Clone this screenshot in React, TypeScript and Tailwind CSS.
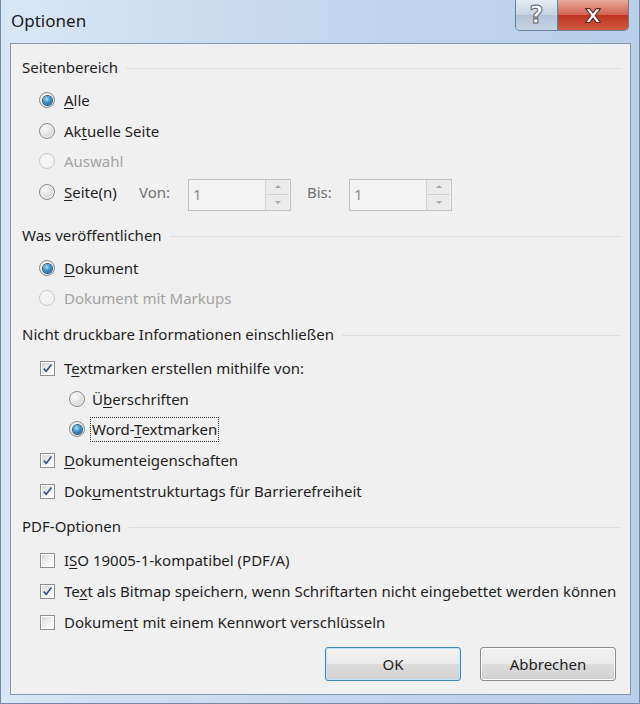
import React from 'react';

type Label = { pre?: string; key?: string; post?: string };

function Radio({ checked = false, disabled = false }: { checked?: boolean; disabled?: boolean }) {
  return (
    <div
      className={`w-[16px] h-[16px] rounded-full border flex items-center justify-center shrink-0 ${
        disabled
          ? 'border-[#c9c9c9] bg-[#f4f4f4]'
          : 'border-[#8a8a8a] bg-[radial-gradient(circle_at_35%_30%,#fdfdfd,#e2e2e2_50%,#c6c6c6)] shadow-[inset_0_0_0_1px_#f2f2f2]'
      }`}
    >
      {checked && (
        <div className="w-[9px] h-[9px] rounded-full bg-[radial-gradient(circle_at_40%_35%,#a9e0fb,#3d8fc4_45%,#17507e)] shadow-[0_0_0_1px_#2a5f8a]" />
      )}
    </div>
  );
}

function Check({ checked = false }: { checked?: boolean }) {
  return (
    <div className="w-[15px] h-[15px] border border-[#8f8f8f] bg-white p-[1px] shrink-0">
      <div className="w-full h-full bg-[linear-gradient(135deg,#d6d6d6,#f3f3f3_60%,#ffffff)] relative">
        {checked && (
          <svg viewBox="0 0 11 11" className="absolute inset-0 w-full h-full">
            <path d="M1.8 5.6 L4.3 8.3 L9.4 1.6" fill="none" stroke="#3c5485" strokeWidth="1.7" strokeLinejoin="round" />
          </svg>
        )}
      </div>
    </div>
  );
}

function Text({ l }: { l: Label }) {
  return (
    <>
      {l.pre}
      {l.key && <span className="underline underline-offset-[2px] decoration-1">{l.key}</span>}
      {l.post}
    </>
  );
}

function Header({ title, mt }: { title: string; mt: string }) {
  return (
    <div className={`flex items-center h-[30px] pl-[11px] pr-[10px] ${mt}`}>
      <span className="text-[#1e1e1e]">{title}</span>
      <div className="flex-1 h-px bg-[#dcdfe2] ml-[8px] mt-[2px]" />
    </div>
  );
}

function RadioRow({ l, checked, disabled, mt }: { l: Label; checked?: boolean; disabled?: boolean; mt: string }) {
  return (
    <div className={`flex items-center h-[30px] pl-[28px] ${mt}`}>
      <Radio checked={checked} disabled={disabled} />
      <span className={`ml-[9px] ${disabled ? 'text-[#a3a3a3]' : 'text-[#1e1e1e]'}`}>
        <Text l={l} />
      </span>
    </div>
  );
}

function SubRadio({ l, checked, focus, mt }: { l: Label; checked?: boolean; focus?: boolean; mt: string }) {
  return (
    <div className={`flex items-center h-[30px] pl-[58px] ${mt}`}>
      <Radio checked={checked} />
      <span
        className={`ml-[5px] px-[1px] leading-[23px] border border-dotted ${
          focus ? 'border-[#333]' : 'border-transparent'
        } text-[#1e1e1e]`}
      >
        <Text l={l} />
      </span>
    </div>
  );
}

function CheckRow({ l, checked, mt }: { l: Label; checked?: boolean; mt: string }) {
  return (
    <div className={`flex items-center h-[30px] pl-[29px] ${mt}`}>
      <Check checked={checked} />
      <span className="ml-[9px] text-[#1e1e1e]">
        <Text l={l} />
      </span>
    </div>
  );
}

function Spin() {
  return (
    <div className="flex items-center w-[103px] h-[32px] border border-[#c2c2c2] bg-[#f3f3f3] mt-[5px] shrink-0">
      <span className="flex-1 pl-[4px] text-[#8c8c8c]">1</span>
      <div className="flex flex-col w-[24px] h-full border-l border-[#d2d2d2] mr-[1px]">
        <div className="flex-1 flex items-center justify-center bg-[#ebebeb] border-b border-[#d2d2d2]">
          <div className="w-0 h-0 border-x-[3px] border-x-transparent border-b-[3px] border-b-[#a8a8a8]" />
        </div>
        <div className="flex-1 flex items-center justify-center bg-[#ebebeb]">
          <div className="w-0 h-0 border-x-[3px] border-x-transparent border-t-[3px] border-t-[#a8a8a8]" />
        </div>
      </div>
    </div>
  );
}

function WinButton({ label, primary }: { label: string; primary?: boolean }) {
  return (
    <div
      className={`w-[136px] h-[34px] rounded-[3px] border flex items-center justify-center text-[#1e1e1e] ${
        primary
          ? 'border-[#3d8bbd] shadow-[inset_0_0_0_1px_#bfe4f9] bg-[linear-gradient(#f3f3f3,#ebebeb_50%,#dcdcdc_50%,#d2d2d2)]'
          : 'border-[#8b8b8b] shadow-[inset_0_0_0_1px_#fafafa] bg-[linear-gradient(#f3f3f3,#ebebeb_50%,#dddddd_50%,#d0d0d0)]'
      }`}
    >
      {label}
    </div>
  );
}

export default function App() {
  return (
    <div className="w-[640px] h-[704px] flex flex-col bg-[linear-gradient(90deg,#d9e6f4,#c3d7ee_50%,#b8cfe9)] border-x border-b border-[#7489a5] font-['Noto_Sans','Open_Sans',sans-serif] text-[15px]">
      {/* title bar */}
      <div className="h-[43px] flex items-start shrink-0">
        <div className="pl-[10px] pt-[8px] text-[17px] text-[#1b1b1b]">Optionen</div>
        <div className="ml-auto mr-[10px] flex h-[31px] border border-t-0 border-[#6b7f99] rounded-b-[5px] overflow-hidden">
          <div className="w-[42px] h-full flex items-center justify-center bg-[linear-gradient(#e4ebf3,#c7d3e2_50%,#b3c3d6_50%,#c6d4e4)] border-r border-[#6b7f99]">
            <span className="text-[24px] font-bold text-white leading-none [-webkit-text-stroke:1px_#58606b] font-['DejaVu_Sans',sans-serif]">?</span>
          </div>
          <div className="w-[70px] h-full flex items-center justify-center bg-[linear-gradient(#e9a99c,#d0614f_50%,#c0321f_50%,#d25b3f)]">
            <svg viewBox="0 0 20 16" className="w-[22px] h-[17px]">
              <path
                d="M3 1.5h4l3 4 3-4h4l-5 6.5 5 6.5h-4l-3-4-3 4H3l5-6.5z"
                fill="#ffffff"
                stroke="#5b2a22"
                strokeWidth="1"
                strokeLinejoin="round"
              />
            </svg>
          </div>
        </div>
      </div>

      {/* content panel */}
      <div className="flex-1 ml-[9px] mr-[8px] mb-[8px] border border-[#8596ab] bg-[#f0f0f0] flex flex-col">
        <Header title="Seitenbereich" mt="mt-[8px]" />
        <RadioRow l={{ key: 'A', post: 'lle' }} checked mt="mt-[3px]" />
        <RadioRow l={{ pre: 'Ak', key: 't', post: 'uelle Seite' }} mt="mt-[1px]" />
        <RadioRow l={{ pre: 'Auswahl' }} disabled mt="mt-0" />
        <div className="flex items-center h-[30px] pl-[28px] mt-[1px]">
          <Radio />
          <span className="ml-[9px] text-[#1e1e1e] w-[75px] shrink-0">
            <Text l={{ key: 'S', post: 'eite(n)' }} />
          </span>
          <span className="text-[#707070] w-[49px] shrink-0">Von:</span>
          <Spin />
          <span className="text-[#707070] ml-[16px] w-[42px] shrink-0">Bis:</span>
          <Spin />
        </div>

        <Header title="Was veröffentlichen" mt="mt-[13px]" />
        <RadioRow l={{ key: 'D', post: 'okument' }} checked mt="mt-[3px]" />
        <RadioRow l={{ pre: 'Dokument mit Markups' }} disabled mt="mt-0" />

        <Header title="Nicht druckbare Informationen einschließen" mt="mt-[6px]" />
        <CheckRow l={{ pre: 'T', key: 'e', post: 'xtmarken erstellen mithilfe von:' }} checked mt="mt-[4px]" />
        <SubRadio l={{ pre: 'Ü', key: 'b', post: 'erschriften' }} mt="mt-[1px]" />
        <SubRadio l={{ pre: 'Word-', key: 'T', post: 'extmarken' }} checked focus mt="mt-0" />
        <CheckRow l={{ key: 'D', post: 'okumenteigenschaften' }} checked mt="mt-[1px]" />
        <CheckRow l={{ pre: 'Dok', key: 'u', post: 'mentstrukturtags für Barrierefreiheit' }} checked mt="mt-[1px]" />

        <Header title="PDF-Optionen" mt="mt-[5px]" />
        <CheckRow l={{ pre: 'I', key: 'S', post: 'O 19005-1-kompatibel (PDF/A)' }} mt="mt-[4px]" />
        <CheckRow
          l={{ pre: 'Te', key: 'x', post: 't als Bitmap speichern, wenn Schriftarten nicht eingebettet werden können' }}
          checked
          mt="mt-[1px]"
        />
        <CheckRow l={{ pre: 'Dokume', key: 'n', post: 't mit einem Kennwort verschlüsseln' }} mt="mt-[1px]" />

        <div className="flex justify-end gap-[19px] mt-[10px] pr-[14px]">
          <WinButton label="OK" primary />
          <WinButton label="Abbrechen" />
        </div>
      </div>
    </div>
  );
}
